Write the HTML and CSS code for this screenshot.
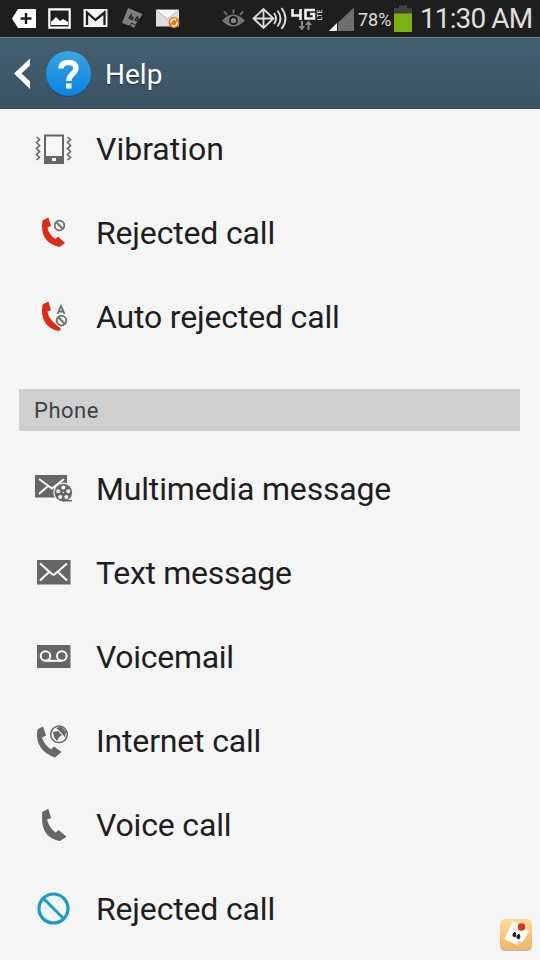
FILE: index.html
```
<!DOCTYPE html>
<html lang="en">
<head>
<meta charset="utf-8">
<title>Help</title>
<link rel="stylesheet" href="styles.css">
</head>
<body>
<div class="screen">
<div class="status">
<svg class="notices" width="190" height="37" viewBox="0 0 190 37">
<path d="M12 18.5L18 9h18v19H18z" fill="#fff"/><path d="M26 13v11M20.500 18.500h11" stroke="#1e1e1e" stroke-width="2.400"/>
<path d="M49.300 9.300h20.400v18.400H49.300z" fill="#1e1e1e" stroke="#fff" stroke-width="2.200"/><path d="M51 25v-3l5-5 4 4 3-2 5 3v3z" fill="#fff"/>
<path d="M83.500 9h24v18h-24z" fill="#f4f4f4"/><path d="M87 25V12.500l8.500 7.500 9-7.500V25" fill="none" stroke="#1e1e1e" stroke-width="2.300"/>
<path d="M128 8l14.500 6-6.500 10-2 4-3-2-9-3z" fill="#808080"/><path d="M132 14l-3 4 3 1.500 1-2-2-1M138 16l-3 4 3 1.500 1-2-2-1" fill="none" stroke="#292929" stroke-width="1.500"/><path d="M130 26l1.500-3 4 2" fill="none" stroke="#292929"/>
<path d="M156 9.500h23v17h-23z" fill="#ddd"/><path d="M156 10l11.500 9L179 10" fill="#f7f7f7" stroke="#aaa" stroke-width=".8"/><circle cx="174" cy="22.500" r="5.500" fill="#e47a19"/><path d="M171 23a3 3 0 0 1 5-3M177 22a3 3 0 0 1-5 3" fill="none" stroke="#fff" stroke-width="1.300"/>
</svg>
<svg class="signals" width="137" height="37" viewBox="221 0 137 37">
<path d="M222 20.500q11-12 23 0-12 12-23 0z" fill="#777"/><circle cx="233.500" cy="20.500" r="4.500" fill="#1e1e1e"/><circle cx="233.500" cy="20.500" r="2.600" fill="#888"/><path d="M233.500 13.500v-4M227 15l-3-3.500M240 15l3-3.500" stroke="#777" stroke-width="1.800"/>
<path d="M253.500 18.500l10-9.500 10 9.500-10 9.500zM263.500 9v19M253.500 18.500h20" fill="none" stroke="#ddd" stroke-width="1.800"/><path d="M274 13q4 5.500 0 11M277.500 10.500q6 8 0 16M281.500 8q8 10.500 0 21" fill="none" stroke="#ddd" stroke-width="1.800"/>
<path d="M292.500 9v6.500h9M300.500 9v11M315 10h-9.500v8.500h8.500V14h-4" fill="none" stroke="#eee" stroke-width="2.600"/>
<text transform="translate(321.500 20.500) rotate(-90)" font-family="Roboto" font-size="6.500" font-weight="500" textLength="11" lengthAdjust="spacingAndGlyphs" fill="#ddd">LTE</text>
<path d="M301 21h2v5h2l-3 4.500-3.500-4.500h2.500zM307.500 30v-5H305l3.500-4.500 3.500 4.500h-2.500v5z" fill="#888"/>
<path d="M329 31l25-23.500V31z" fill="#6e6e6e"/><path d="M329 31l8-8v8z" fill="#eee"/><path d="M337.500 22v9" stroke="#1e1e1e"/>
</svg>
<span class="percent">78%</span>
<svg class="battery" width="18" height="37" viewBox="0 0 18 37"><path d="M0 8h5V5.500h8V8h5v6H0z" fill="#414141"/><path d="M0 13.500h18V32H0z" fill="#7cb013"/></svg>
<span class="clock">11:30 AM</span>
</div>
<header class="bar">
<svg width="80" height="72" viewBox="14 37 80 72">
<defs><linearGradient id="q" x1="0" y1="0" x2="0" y2="1"><stop offset="0" stop-color="#38a6e0"/><stop offset="1" stop-color="#0b83e3"/></linearGradient></defs>
<path d="M30 58.500v7l-8.500 8 8.500 8v7.500L14 73.500z" fill="#fff"/>
<circle cx="68.500" cy="74.500" r="22.500" fill="#244c66"/><circle cx="68.500" cy="73.500" r="22.500" fill="url(#q)"/>
<path d="M61 68.500c0-4 3-6 7.500-6s7.500 2 7.500 5.800c0 5.200-7.200 5.700-7.200 12.700" fill="none" stroke="#fff" stroke-width="5.400"/><path d="M66 83.500h5.500v5H66z" fill="#fff"/>
</svg>
<span class="title">Help</span>
</header>
<main>
<div class="list">
<div class="row"><svg class="icon" viewBox="30 129 48 40"><path d="M45 135.500h18v27.500H45z" fill="#f7f7f7" stroke="#666" stroke-width="2"/><path d="M44 156h20v8H44z" fill="#666"/><path d="M52 158h4v3h-4z" fill="#fff"/><path d="M36.500 137l3 2.500-3 3 3 3-3 3 3 3-3 3 3 3-3 2.500M67.500 137l3 2.500-3 3 3 3-3 3 3 3-3 3 3 3-3 2.500" fill="none" stroke="#666" stroke-width="1.600"/></svg><span>Vibration</span></div>
<div class="row snug"><svg class="icon" viewBox="30 213 48 40"><path d="M42.500 220.500l6-3 2.500 8.500-3.500 1.500q1 7 8 11.500l2.500-2.500 7 6.500-5.500 4Q42 243 42 226z" fill="#dc2b12"/><circle cx="59.500" cy="225.500" r="4.800" fill="none" stroke="#667070" stroke-width="1.800"/><path d="M56 222l7 7" stroke="#667070" stroke-width="1.800"/></svg><span>Rejected call</span></div>
<div class="row snug"><svg class="icon" viewBox="30 297 48 40"><path d="M42.500 304.500l6-3 2.500 8.500-3.500 1.500q1 7 8 12.500l6 5.500-3.500 1.500Q42 327 42 310z" fill="#dc2b12"/><circle cx="61.500" cy="320.500" r="6.500" fill="#f5f5f5"/><circle cx="61.500" cy="320.500" r="4.800" fill="none" stroke="#667070" stroke-width="1.800"/><path d="M58 317l7 7M57.500 314l3.500-8 3.500 8M59 311.500h4" fill="none" stroke="#667070" stroke-width="1.800"/></svg><span>Auto rejected call</span></div>
</div>
<h2 class="section">Phone</h2>
<div class="list phone">
<div class="row snug"><svg class="icon" viewBox="30 470 48 40"><path d="M35 475h32v22.500H35z" fill="#666"/><path d="M39 479l13 9.500L64 479M39 494l9-8" fill="none" stroke="#fff" stroke-width="1.900"/><circle cx="63.300" cy="492.500" r="10" fill="#f5f5f5"/><circle cx="63.300" cy="492.500" r="8.800" fill="#666"/><path d="M62 500h10v1.500H62z" fill="#666"/><g fill="#f7f7f7"><circle cx="63.300" cy="487.500" r="2"/><circle cx="58.300" cy="491.200" r="2"/><circle cx="68.300" cy="491.200" r="2"/><circle cx="60.300" cy="497" r="2"/><circle cx="66.300" cy="497" r="2"/><circle cx="63.300" cy="492.500" r=".7"/></g></svg><span>Multimedia message</span></div>
<div class="row tight"><svg class="icon" viewBox="30 554 48 40"><path d="M37 560h33.500v24.500H37z" fill="#666"/><path d="M40 563.500l12 10.500q1.500 1.200 3 0l12-10.500M40 580.500l9-8.500M67 580.500l-9-8.500" fill="none" stroke="#fff" stroke-width="2.100"/></svg><span>Text message</span></div>
<div class="row tight"><svg class="icon" viewBox="30 638 48 40"><path d="M37 645h33.500v23H37z" fill="#666"/><g fill="none" stroke="#fff" stroke-width="2"><circle cx="45.500" cy="656" r="4.800"/><circle cx="61.800" cy="656" r="4.800"/><path d="M45.500 660.800h16.300"/></g></svg><span>Voicemail</span></div>
<div class="row snug"><svg class="icon" viewBox="30 722 48 40"><path d="M38 729l5-2.500 3 9-4 2q2 7 9 12l3-3 7.500 5.500-6.500 5.500Q36 751 37 732z" fill="#666"/><circle cx="59" cy="734.300" r="8.300" fill="#f5f5f5" stroke="#666" stroke-width="1.500"/><path d="M53 732l5-1 4 4-3 2-2 4-3-4zM56 728l5-1.500 5 5-1 6-3-4-3-3z" fill="#666"/></svg><span>Internet call</span></div>
<div class="row snug"><svg class="icon" viewBox="30 806 48 40"><path d="M42.300 812l6-3.300 2.800 9.300-4 1.500q1.500 7.500 8.500 13l3-2.500 7.900 6.700-6.500 4.300Q42 838 42 818z" fill="#666"/></svg><span>Voice call</span></div>
<div class="row snug"><svg class="icon" viewBox="30 890 48 40"><circle cx="53.500" cy="908.500" r="14.500" fill="none" stroke="#189bc9" stroke-width="3.200"/><path d="M43.500 898.500l20 20" stroke="#189bc9" stroke-width="3"/></svg><span>Rejected call</span></div>
</div>
</main>
<svg class="note" width="40" height="40" viewBox="496 914 40 40">
<defs><linearGradient id="n" x1="0" y1="0" x2="0" y2="1"><stop offset="0" stop-color="#ffdc9c"/><stop offset="1" stop-color="#f1b660"/></linearGradient></defs>
<rect x="500" y="920" width="32" height="31" rx="5" fill="#bbb"/><rect x="500" y="919" width="32" height="30.500" rx="5" fill="url(#n)"/><path d="M513 921l16 10-6 11-6 3-13-6z" fill="#fffdf5"/><path d="M517 945l1-4 5 1z" fill="#d8d3c5"/><circle cx="521.500" cy="927" r="3.700" fill="#d93422"/><path d="M515 932l-2 2 0 2 2 1 1-2zM519 934l-2 2 0 2 2 1 1-2z" fill="#222" stroke="#222"/>
</svg>
</div>
</body>
</html>
```
FILE: styles.css
```
body { margin: 0; }
.screen {
  position: relative;
  width: 540px;
  height: 960px;
  overflow: hidden;
  background: #f5f5f5;
  font-family: Roboto, "Liberation Sans", sans-serif;
}
.status {
  display: flex;
  height: 37px;
  background: #1e1e1e;
  color: #dedede;
  line-height: 38px;
  white-space: nowrap;
}
.signals { margin-left: 31px; }
.percent { width: 36px; font-size: 18px; line-height: 40px; }
.battery { flex: none; }
.clock { margin-left: 8px; font-size: 28px; letter-spacing: -0.9px; }
.bar {
  box-sizing: border-box;
  display: flex;
  height: 72px;
  padding-left: 14px;
  background: linear-gradient(#446073, #3a5262);
  box-shadow: inset 0 1px #6b8291, inset 0 -1px #344c5b;
}
.title {
  margin-left: 11px;
  color: #fff;
  font-size: 28px;
  line-height: 75px;
  text-shadow: 0 1px 1px #1b2d38;
}
main { padding-top: 2px; }
.list { display: grid; grid-auto-rows: 84px; margin-top: -4px; }
.row {
  display: flex;
  align-items: center;
  padding-left: 30px;
  color: #1e1e1e;
  font-size: 32px;
  white-space: nowrap;
}
.snug { letter-spacing: -0.17px; }
.tight { letter-spacing: -0.3px; }
.phone span { padding-bottom: 2px; }
.icon { width: 48px; height: 40px; margin-right: 18px; }
.section {
  box-sizing: border-box;
  height: 42px;
  margin: 30px 20px 21px 19px;
  padding-left: 15px;
  background: #cfcfcf;
  color: #3d4247;
  font-size: 22px;
  font-weight: 400;
  letter-spacing: 0.5px;
  line-height: 44px;
}
.note { position: absolute; left: 496px; top: 914px; }
```
